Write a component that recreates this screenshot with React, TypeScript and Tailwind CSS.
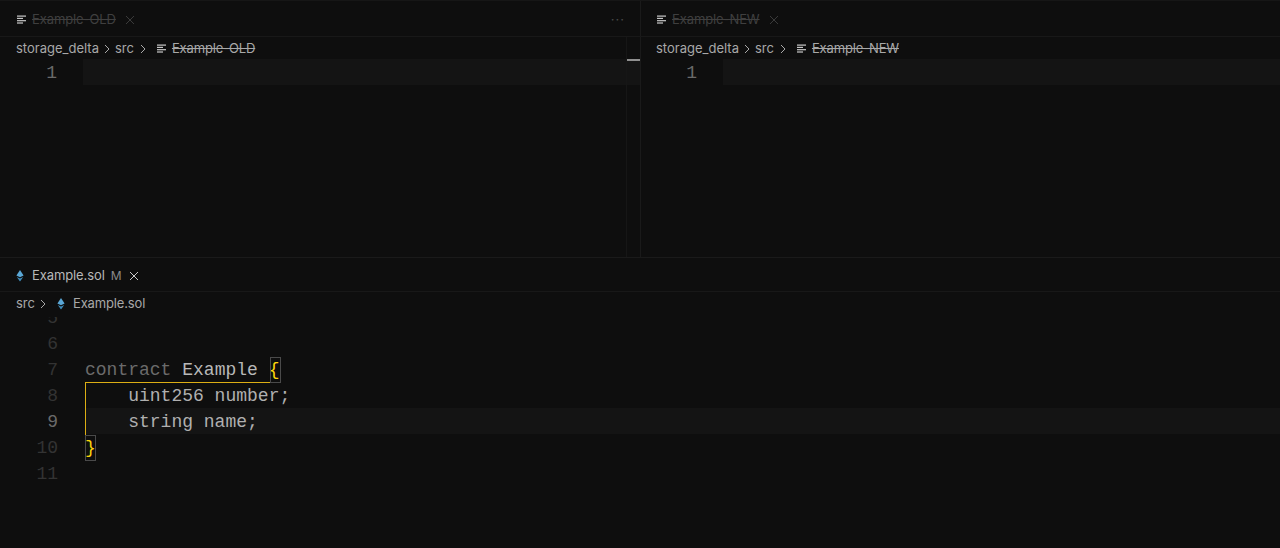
import React from 'react';

const UI_FONT = "font-['Inter','Liberation_Sans',sans-serif]";
const MONO_FONT = "font-['Liberation_Mono','DejaVu_Sans_Mono',monospace]";

const LinesIcon = () => (
  <svg width="10" height="10" viewBox="0 0 10 10" className="shrink-0" fill="#c8c8c8">
    <rect x="0" y="0.5" width="9" height="1.2" />
    <rect x="0" y="2.8" width="6" height="1.2" />
    <rect x="0" y="5.1" width="9" height="1.2" />
    <rect x="0" y="7.4" width="6" height="1.2" />
  </svg>
);

const EthIcon = () => (
  <svg width="8" height="12" viewBox="0 0 8 12" className="shrink-0">
    <path d="M4 0 L7.6 5.4 L4 7.2 L0.4 5.4 Z" fill="#5aa7d6" />
    <path d="M0.8 7 L4 8.6 L7.2 7 L4 11.6 Z" fill="#3f8dbd" />
  </svg>
);

const CloseIcon = ({ color }: { color: string }) => (
  <svg width="10" height="10" viewBox="0 0 10 10" className="shrink-0" stroke={color} strokeWidth="1" fill="none">
    <path d="M1 1 L9 9 M9 1 L1 9" />
  </svg>
);

const Chevron = () => (
  <svg width="6" height="10" viewBox="0 0 6 10" className="shrink-0" stroke="#a8a8a8" strokeWidth="1" fill="none">
    <path d="M1 1 L5 5 L1 9" />
  </svg>
);

const DeletedPane = ({ name, more }: { name: string; more?: boolean }) => (
  <div className="relative flex-1 min-w-0 flex flex-col">
    <div className="h-[36px] flex items-center pl-[17px] pr-[15px] border-b border-[#181818] pt-[2px]">
      <LinesIcon />
      <span className="ml-[5px] text-[13px] tracking-[-0.1px] text-[#3f3f3f] line-through">{name}</span>
      <span className="ml-[9px]"><CloseIcon color="#3a3a3a" /></span>
      {more && <span className="ml-auto text-[13px] leading-none tracking-[1px] text-[#4a4a4a]">···</span>}
    </div>
    <div className="h-[22px] flex items-center pl-4 pt-[2px] text-[13px] text-[#a8a8a8]">
      <span>storage_delta</span>
      <span className="ml-[5px]"><Chevron /></span>
      <span className="ml-[5px]">src</span>
      <span className="ml-[6px]"><Chevron /></span>
      <span className="ml-[11px]"><LinesIcon /></span>
      <span className="ml-[5px] tracking-[-0.15px] line-through">{name}</span>
    </div>
    <div className={`h-[26px] flex ${MONO_FONT} text-[18px] leading-[26px]`}>
      <span className="w-[57px] pt-px text-right text-[#6a6a6a]">1</span>
      <div className="ml-[26px] flex-1 bg-[#141414]" />
    </div>
  </div>
);

const lines = [
  { n: 5, text: null },
  { n: 6, text: null },
  { n: 7, text: 'contract' },
  { n: 8, text: '    uint256 number;' },
  { n: 9, text: '    string name;' },
  { n: 10, text: '}' },
  { n: 11, text: null },
];

const App: React.FC = () => {
  return (
    <div className={`w-[1280px] h-[548px] overflow-hidden bg-[#0e0e0e] flex flex-col ${UI_FONT}`}>
      {/* Deleted files on top */}
      <div className="relative h-[258px] flex border-b border-[#1a1a1a] border-t border-t-[#161616]">
        <div className="w-[641px] flex border-r border-[#1a1a1a] relative">
          <DeletedPane name="Example-OLD" more />
          <div className="absolute left-[626px] top-[36px] bottom-0 w-px bg-[#161616]" />
          <div className="absolute left-[627px] top-[58px] w-[13px] h-0.5 bg-[#8f8f8f]" />
        </div>
        <div className="flex-1 min-w-0 flex -ml-px">
          <DeletedPane name="Example-NEW" />
        </div>
      </div>

      {/* Example.sol */}
      <div className="flex-1 flex flex-col min-h-0">
        <div className="h-[34px] flex items-center pl-4 pt-[2px] border-b border-[#181818] shrink-0">
          <EthIcon />
          <span className="ml-2 text-[13px] tracking-[-0.1px] text-[#b8b8b8]">Example.sol</span>
          <span className="ml-[6px] text-[12px] text-[#8a8a8a]">M</span>
          <span className="ml-[7px]"><CloseIcon color="#c8c8c8" /></span>
        </div>
        <div className="h-[25px] flex items-center pl-4 pb-px text-[13px] text-[#a8a8a8] shrink-0">
          <span>src</span>
          <span className="ml-[5px]"><Chevron /></span>
          <span className="ml-[11px]"><EthIcon /></span>
          <span className="ml-2 tracking-[-0.15px]">Example.sol</span>
        </div>
        <div className={`relative flex-1 overflow-hidden ${MONO_FONT} text-[18px] leading-[26px] whitespace-pre`}>
          <div className="-mt-[13px]">
            {lines.map((l) => (
              <div key={l.n} className="h-[26px] flex">
                <span className={`w-[58px] pt-px text-right ${l.n === 9 ? 'text-[#6a6a6a]' : 'text-[#333333]'}`}>{l.n}</span>
                <div className={`ml-[27px] pt-px flex-1 text-[#b0b0b0] ${l.n === 9 ? 'bg-[#141414]' : ''}`}>
                  {l.n === 7 ? (
                    <>
                      <span className="text-[#6b6b6b]">contract</span>
                      <span className="text-[#b8b8b8]"> Example </span>
                      <span className="text-[#ffd60a]">{'{'}</span>
                    </>
                  ) : l.n === 10 ? (
                    <span className="text-[#ffd60a]">{'}'}</span>
                  ) : (
                    l.text
                  )}
                </div>
              </div>
            ))}
          </div>
          {/* Bracket guide and matching bracket boxes */}
          <div className="absolute left-[85px] top-[65px] w-[186px] h-[53px] border-t border-l border-[#dcae14]" />
          <div className="absolute left-[270px] top-[40px] w-[11px] h-[26px] border border-[#4a4a4a]" />
          <div className="absolute left-[85px] top-[118px] w-[11px] h-[26px] border border-[#4a4a4a]" />
        </div>
      </div>
    </div>
  );
};

export default App;
